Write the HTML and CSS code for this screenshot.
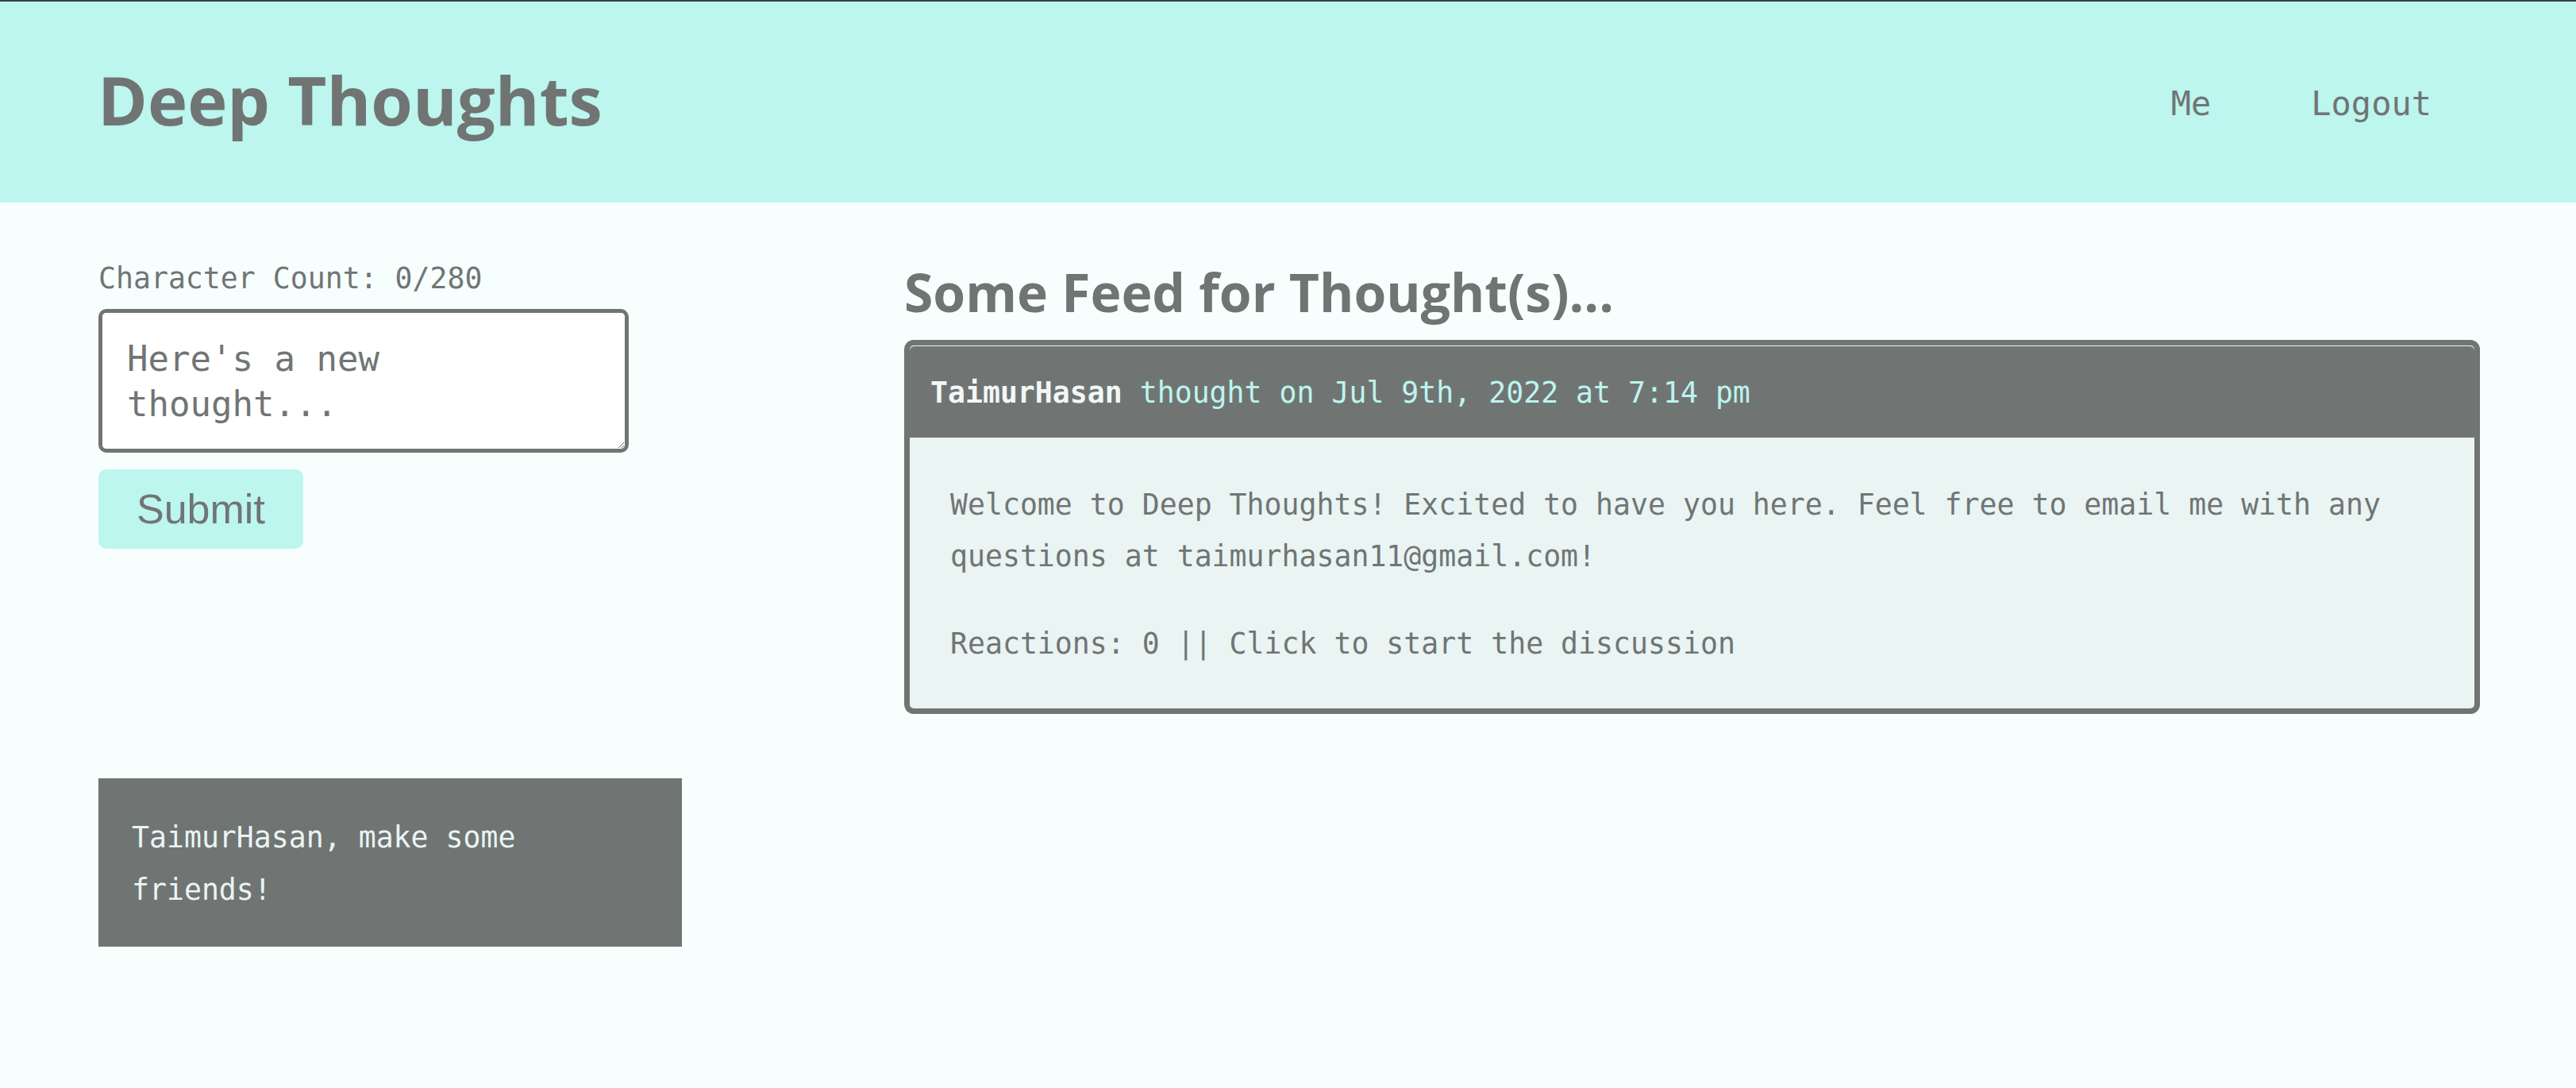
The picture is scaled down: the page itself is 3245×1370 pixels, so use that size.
FILE: index.html
```html
<!DOCTYPE html>
<html lang="en">
<head>
<meta charset="utf-8">
<title>Deep Thoughts</title>
<link rel="stylesheet" href="styles.css">
</head>
<body>
<header class="site-header">
  <h1 class="brand">Deep Thoughts</h1>
  <nav class="nav">
    <a class="nav-link" href="#">Me</a>
    <a class="nav-link" href="#">Logout</a>
  </nav>
</header>
<main class="main">
  <aside class="side">
    <form class="thought-form">
      <p class="count">Character Count: 0/280</p>
      <textarea class="thought-input" placeholder="Here's a new thought..."></textarea>
      <button class="submit" type="button">Submit</button>
    </form>
    <div class="friends">TaimurHasan, make some friends!</div>
  </aside>
  <section class="feed">
    <h2 class="feed-title">Some Feed for Thought(s)...</h2>
    <article class="card">
      <div class="card-header"><span class="author">TaimurHasan</span> thought on Jul 9th, 2022 at 7:14 pm</div>
      <div class="card-body">
        <p class="card-text">Welcome to Deep Thoughts! Excited to have you here. Feel free to email me with any questions at taimurhasan11@gmail.com!</p>
        <p class="card-meta">Reactions: 0 || Click to start the discussion</p>
      </div>
    </article>
  </section>
</main>
</body>
</html>
```
FILE: styles.css
```css
html {
  background: #f7fffe;
}
body {
  margin: 0;
  min-height: 1370px;
  background: #f7fffe;
  color: #707574;
  font-family: "DejaVu Sans Mono", "Liberation Mono", monospace;
}
.site-header {
  display: flex;
  justify-content: space-between;
  align-items: center;
  height: 253px;
  border-top: 2px solid #3b3f3e;
  background: #bdf5ef;
  padding: 0 182px 0 123px;
}
.brand {
  margin: 0 0 7px 0;
  font-family: "Open Sans", "Liberation Sans", sans-serif;
  font-weight: 700;
  font-size: 85px;
  line-height: 116px;
  color: #707574;
}
.nav {
  display: flex;
  gap: 126px;
  margin-top: 4px;
}
.nav-link {
  font-size: 42px;
  line-height: 63px;
  color: #707574;
  text-decoration: none;
}
.main {
  display: grid;
  grid-template-columns: 1015px 1fr;
  padding: 68px 121px 0 124px;
}
.side {
  display: flex;
  flex-direction: column;
  align-items: flex-start;
}
.thought-form {
  display: flex;
  flex-direction: column;
  align-items: flex-start;
}
.count {
  margin: 0;
  font-size: 36.5px;
  line-height: 55px;
}
.thought-input {
  box-sizing: border-box;
  width: 668px;
  height: 181px;
  margin-top: 11px;
  padding: 29px 31px;
  border: 5px solid #707574;
  border-radius: 10px;
  background: #fff;
  color: #707574;
  font-family: "DejaVu Sans Mono", "Liberation Mono", monospace;
  font-size: 44px;
  line-height: 57px;
  outline: none;
}
.thought-input::placeholder {
  color: #707574;
  opacity: 1;
}
.submit {
  margin-top: 21px;
  padding: 20px 48px;
  border: none;
  border-radius: 10px;
  background: #bdf5ef;
  color: #707574;
  font-family: "Liberation Sans", Arial, sans-serif;
  font-size: 52px;
  line-height: normal;
}
.friends {
  box-sizing: border-box;
  width: 735px;
  margin-top: 289px;
  padding: 42px 42px 38px;
  background: #707574;
  color: #eaf4f3;
  font-size: 36.5px;
  line-height: 66px;
}
.feed-title {
  margin: 5px 0 21px;
  font-family: "Open Sans", "Liberation Sans", sans-serif;
  font-weight: 700;
  font-size: 66px;
  line-height: 79px;
  color: #707574;
}
.card {
  border: 7px solid #707574;
  border-radius: 12px;
  background: #e9f4f3;
  overflow: hidden;
}
.card-header {
  border-top: 1px solid #e9f4f3;
  border-radius: 6px 6px 0 0;
  background: #707574;
  color: #bdf5ef;
  padding: 31px 26px 29px;
  font-size: 36.5px;
  line-height: 55px;
}
.author {
  color: #f2f8f7;
  font-weight: 700;
}
.card-body {
  padding: 52px 51px 49px;
}
.card-text {
  margin: 0 0 45px;
  font-size: 36.5px;
  line-height: 65px;
}
.card-meta {
  margin: 0;
  font-size: 36.5px;
  line-height: 65px;
}
```
